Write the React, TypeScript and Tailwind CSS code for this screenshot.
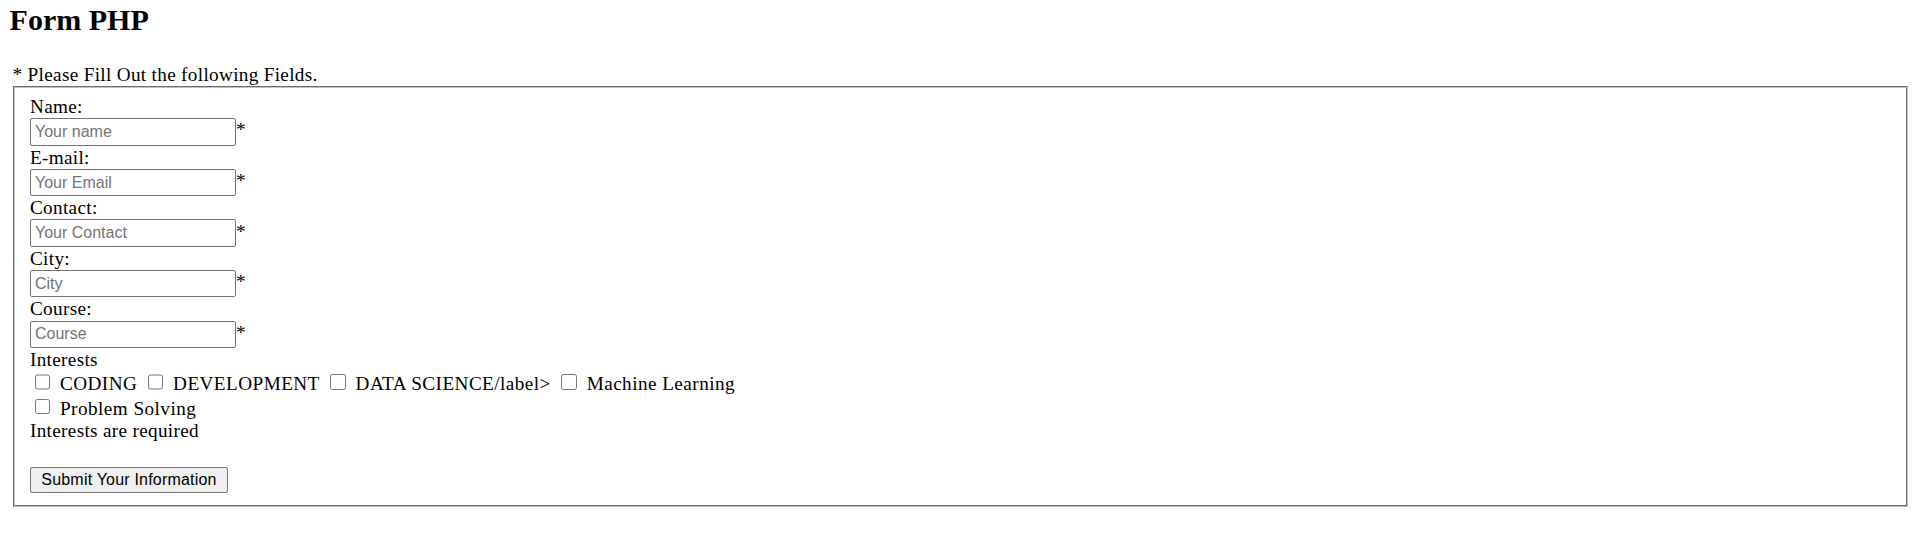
const fields = [
  { label: 'Name:', placeholder: 'Your name' },
  { label: 'E-mail:', placeholder: 'Your Email' },
  { label: 'Contact:', placeholder: 'Your Contact' },
  { label: 'City:', placeholder: 'City' },
  { label: 'Course:', placeholder: 'Course' },
];

const interestRows = [
  ['CODING', 'DEVELOPMENT', 'DATA SCIENCE/label>', 'Machine Learning'],
  ['Problem Solving'],
];

export default function App() {
  return (
    <div className="min-h-[558px] bg-white px-[9.6px] pt-[4.4px] font-['Liberation_Serif','Times_New_Roman',serif] text-[19.2px] tracking-[0.32px] text-black">
      <h2 className="text-[30px] font-bold leading-[32px] tracking-normal">Form PHP</h2>

      <div className="mt-[27.6px] ml-[3px] leading-[22px]">* Please Fill Out the following Fields.</div>

      <form onSubmit={(e) => e.preventDefault()}>
        <fieldset className="mr-[2.4px] ml-[3px] border-2 border-[#c0c0c0] [border-style:groove] pt-[8px] pr-[16px] pb-[11.7px] pl-[15.4px]">
          {fields.map((field) => (
            <div key={field.label}>
              <div className="leading-[22px]">{field.label}</div>
              <div className="flex h-[28.6px] items-start">
                <input
                  type="text"
                  placeholder={field.placeholder}
                  className="mt-[0.3px] h-[27.4px] w-[206px] rounded-[2px] border border-[#767676] bg-white px-[4px] font-['Liberation_Sans',Arial,sans-serif] text-[16px] tracking-normal text-black outline-none placeholder:text-[#757575]"
                />
                <span className="mt-[1.5px] leading-[22px]">*</span>
              </div>
            </div>
          ))}

          <div className="leading-[22px]">Interests</div>
          {interestRows.map((row, i) => (
            <div key={i} className="flex h-[24.5px] items-start">
              {row.map((name) => (
                <label key={name} className="flex items-start">
                  <input
                    type="checkbox"
                    className="mt-[3.4px] mr-[3.6px] ml-[4.8px] h-[15.6px] w-[15.6px]"
                  />
                  <span className="mr-[5.8px] ml-[6px] pt-[2.5px] leading-[22px] tracking-[0.45px]">{name}</span>
                </label>
              ))}
            </div>
          ))}
          <div className="leading-[22px]">Interests are required</div>
          <div className="h-[22px]" />

          <button
            type="submit"
            className="mt-[2.7px] flex h-[26.6px] w-[198px] items-center justify-center rounded-[2px] border border-[#767676] bg-[#efefef] font-['Liberation_Sans',Arial,sans-serif] text-[16px] tracking-[0.2px] text-black"
          >
            Submit Your Information
          </button>
        </fieldset>
      </form>
    </div>
  );
}
